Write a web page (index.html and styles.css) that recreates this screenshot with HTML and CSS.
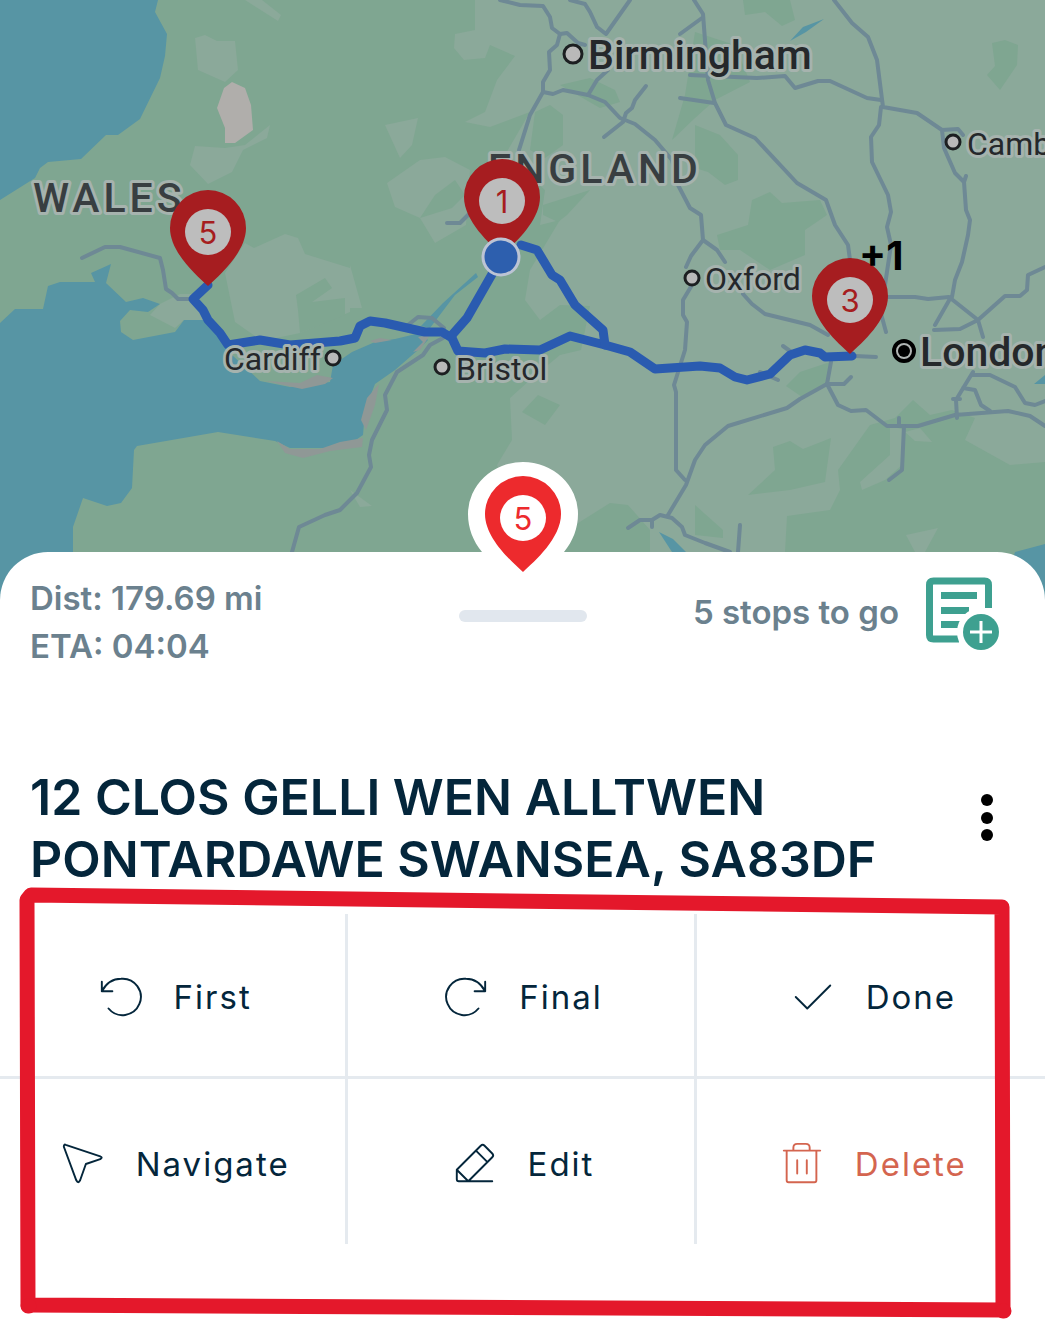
FILE: index.html
```
<!DOCTYPE html>
<html lang="en">
<head>
  <meta charset="UTF-8" />
  <meta name="viewport" content="width=device-width, initial-scale=1.0"/>
  <title>Route Planner</title>
  <link rel="stylesheet" href="styles.css">
</head>
<body>
  <div class="map">
    <svg class="map-canvas" viewBox="0 0 1045 600" preserveAspectRatio="xMidYMin slice" role="img" aria-label="Route map">
      <defs>
        <path id="pin" d="M0 0C-12 -11 -38 -34 -38 -58A38 38 0 0 1 38 -58C38 -34 12 -11 0 0Z"/>
      </defs>

      <!-- lighter ground -->
      <g class="field">
        <path d="M475 0V30L455 34L454 48L464 60L485 58L490 45L515 56L497 80L485 112L465 122L490 127L530 112L505 155L545 190L540 225L560 220L530 270L525 300L540 320L560 305L590 306L581 350L560 355L530 380L510 398L512 440L497 465L530 552H1045V0Z"/>
        <path d="M195 38L205 35L217 41L235 41L238 70L225 82L198 70Z"/>
        <path d="M195 146L225 148L245 145L270 125L267 138L243 150L232 172L208 184L190 165Z"/>
        <path d="M225 273L245 243L254 248L285 234L298 238L305 254L350 268V312L300 333L262 341L235 322Z"/>
        <path d="M385 125L418 118L412 145L400 158Z"/>
        <path d="M387 183L420 160L445 157L470 170L466 225L435 243L420 218L395 207Z"/>
        <path d="M350 265L362 308H350ZM245 0H262L281 15L278 21Z"/>
        <path d="M160 304L180 294H196L205 320H184L175 328L150 315Z"/>
        <path d="M350 490L372 506L360 507Z"/>
      </g>
      <g class="wood">
        <path d="M560 85L590 78L615 90L620 102L600 108Z"/>
        <path d="M535 112L550 105L563 115V145L545 158L530 150Z"/>
        <path d="M743 0H790L795 20L782 26L765 12L745 15Z"/>
        <path d="M695 32L735 45L750 82L715 100L695 118L672 140L685 95Z"/>
        <path d="M695 125L720 135L738 155L738 180L725 185L708 172L695 168Z"/>
        <path d="M717 235L748 225L752 200L770 192L782 203L820 200L827 215L805 230V255L770 270L740 250L720 250Z"/>
        <path d="M992 43L1005 40L1018 45L1017 65L1000 90L987 75L995 66Z"/>
        <path d="M543 205L590 190L567 215L558 222L543 215Z"/>
        <path d="M420 218L435 195L455 180L465 195L452 208Z"/>
        <path d="M786 386L800 372L830 362L828 382L802 397Z"/>
        <path d="M522 412L538 395L560 405L545 425Z"/>
        <path d="M773 447L790 441L803 449L831 438L825 482L790 490L748 495L775 470Z"/>
        <path d="M838 470L870 425L895 418L913 400L930 415L952 410L975 418L965 440L1010 465L1045 462V552H785L787 516L830 510L840 490Z"/>
        <path d="M575 525L610 503L628 505L650 530V552H560Z"/>
        <path d="M695 505L723 530V538L695 535Z"/>
        <path d="M298 310L296 295L325 278L332 288L312 302L345 298V315L300 333Z"/>
      </g>
      <g class="field">
        <path d="M860 482L890 455V426L905 430L902 465L885 480L862 490Z"/>
        <path d="M906 535L938 528L925 552H915Z"/>
        <path d="M905 432L920 428L932 442L915 441Z"/>
      </g>
      <path class="town" d="M224 88L232 82L245 88L251 105L253 130L235 143H225V128L217 108Z"/>

      <!-- sea and rivers -->
      <g class="water">
        <path d="M0 0H158L155 12L167 34L165 56L160 78L140 119L118 135H106L81 159L48 162L40 168L35 178L0 200Z"/>
        <path d="M0 323L15 309H43L48 286L60 282H95L91 273L111 264L106 283L126 302L143 298L160 304L148 312L130 310L120 321L121 332L133 340L175 332L184 320H205L232 355L260 381L290 387L330 382L333 365L352 352L375 342L395 339L420 333L428 340L418 350L395 370L375 384L365 410L363 435L350 444L335 448H290L275 441L218 432L137 446L134 450L132 488L121 503L107 506L83 498L73 527V600H0Z"/>
        <path d="M421 326L443 303L476 273L478 277L455 295L430 328Z"/>
        <path d="M790 41L803 27L824 19L806 32Z"/>
        <path d="M659 532L673 539L686 552H672Z"/>
        <path d="M1015 552L1045 544V600H1000ZM1034 384L1045 375V384Z"/>
      </g>
      <g class="shore">
        <path d="M265 381L300 383L317 375L333 378L325 384L302 389Z"/>
        <path d="M277 441L290 449H320L340 442L363 438L362 447L330 451L303 458L285 453Z"/>
        <path d="M379 384L375 405L366 430L361 420L367 398Z"/>
        <path d="M370 341L380 338L392 340L375 343ZM418 337L430 335L420 350L413 352L423 342Z"/>
      </g>

      <g class="road">
        <path d="M500 0L520 5L543 6L550 17L552 28L560 34L567 33L578 43L585 45"/>
        <path d="M560 34L557 45L549 52L550 70L543 82L543 92L530 115L519 150"/>
        <path d="M570 0L585 4L590 12L597 27L606 34L630 0"/>
        <path d="M543 92L553 94L563 90L588 95L605 102L620 118L635 124L655 140L672 160L678 185L690 208L701 215L703 240L691 256L686 267"/>
        <path d="M588 95L597 80L608 70M646 86L635 100L632 108L626 113L623 122L604 137"/>
        <path d="M680 98L714 103M680 34L702 18"/>
        <path d="M694 0L703 14L708 80L715 103L726 125L755 138L797 183L826 200L835 225L848 245L850 260"/>
        <path d="M690 75L757 78L785 76L795 88L818 81H830L867 98L881 100"/>
        <path d="M834 0L852 23L868 37L877 60L883 107L917 113L942 130L944 148L955 173L964 182L966 210L970 220L968 235L962 262L955 280L952 297M964 182L966 176M942 130L958 129L963 135"/>
        <path d="M881 107L879 125L871 137L872 162L888 195L891 212L887 227L891 245L885 285L880 310L886 332"/>
        <path d="M885 297H915L928 299L949 297L978 320L983 337M951 297L935 325M934 330L960 329L978 320L1005 296H1020L1027 290L1028 275L1045 267"/>
        <path d="M703 240L717 250L725 262M743 294L752 304L765 314L810 325L828 335"/>
        <path d="M855 356L876 357M783 346L790 351M760 372L778 380"/>
        <path d="M831 362L827 384L838 405L851 411L866 410L887 426H918L955 415L1008 411L1030 416L1045 426"/>
        <path d="M827 384L800 399L787 408L728 426L705 445L695 460L686 485L668 515"/>
        <path d="M827 384H844L851 377M904 426L902 470L889 480M899 418V426"/>
        <path d="M692 285L683 300V315L687 322L685 350L674 385L676 392V470L685 480"/>
        <path d="M628 528L640 520H652L660 515L672 518L682 527L685 535L705 543L730 552M652 520V527"/>
        <path d="M740 525L738 552"/>
        <path d="M443 338L430 345L423 355L397 372L385 395L387 410L372 440L369 455L371 467L357 493L340 510L325 515L299 527L292 552"/>
        <path d="M82 258L105 247H120L160 258L163 270L166 289L172 293L178 299H195"/>
        <path d="M447 223H460L468 215M408 325L418 317L432 318L444 328"/>
        <path d="M973 372L962 390L956 400L957 418M973 375H990L1015 387L1025 403L1035 405L1045 401M963 388L975 390L981 405L990 411M953 399H960"/>
      </g>

      <g class="route">
        <path d="M208 285L193 299L203 310L208 320L220 333L228 345L260 340L290 345L340 341L355 338L360 326L370 321L385 323L425 332H442L452 338L458 351L485 353L505 349L540 350L570 336L605 345L630 352L655 369L700 366L720 368L735 377L747 380L770 374L790 355L805 350L820 353L825 357L852 356"/>
        <path d="M452 335L467 318L499 262"/>
        <path d="M521 245L537 250L552 275L560 280L575 305L603 330L605 345"/>
      </g>

      <g class="city-dot">
        <circle cx="573" cy="54" r="9"/>
        <circle cx="953" cy="142" r="7"/>
        <circle cx="692" cy="278" r="7"/>
        <circle cx="442" cy="367" r="7"/>
        <circle cx="333" cy="358" r="7"/>
      </g>
      <circle class="capital-ring" cx="904" cy="351" r="10"/>
      <circle cx="904" cy="351" r="6"/>

      <g class="label">
        <text class="city-large" x="588" y="69">Birmingham</text>
        <text class="city-large" x="920" y="366">London</text>
        <text x="967" y="155">Cambridge</text>
        <text x="705" y="290">Oxford</text>
        <text x="456" y="380">Bristol</text>
        <text x="224" y="370">Cardiff</text>
        <text class="country" x="33" y="212">WALES</text>
        <text class="country" x="488" y="183">ENGLAND</text>
      </g>

      <g class="stop" transform="translate(208 286)">
        <use href="#pin"/>
        <circle cy="-54" r="23"/>
        <text y="-42">5</text>
      </g>
      <g class="stop" transform="translate(502 255)">
        <use href="#pin"/>
        <circle cy="-54" r="23"/>
        <text y="-42">1</text>
      </g>
      <g class="stop" transform="translate(850 354)">
        <use href="#pin"/>
        <circle cy="-54" r="23"/>
        <text y="-42">3</text>
      </g>
      <circle class="me" cx="501" cy="257" r="18"/>
      <text class="more-stops" x="859" y="270">+1</text>
    </svg>
  </div>

  <main class="sheet">
    <svg class="active-pin" viewBox="-56 -112 112 112" aria-label="Stop 5">
      <path class="halo" d="M-41 -20C-50 -31 -55 -44 -55 -58A55 52 0 0 1 55 -58C55 -44 50 -31 41 -20Z"/>
      <use href="#pin"/>
      <circle cy="-54" r="23"/>
      <text y="-42">5</text>
    </svg>

    <header class="summary">
      <div class="trip">
        <div>Dist: 179.69 mi</div>
        <div>ETA: 04:04</div>
      </div>
      <div class="handle"></div>
      <div class="remaining">
        <span>5 stops to go</span>
        <button class="icon-btn" aria-label="Add stop">
          <svg width="76" height="76" viewBox="0 0 76 76">
            <path d="M65.500 34V11Q65.500 7 61.500 7H10.500Q6.500 7 6.500 11V61Q6.500 65 10.500 65H36M18 21.500H54M18 36.500H46M18 50.500H38" fill="none" stroke="#3ea090" stroke-width="7"/>
            <circle cx="58" cy="58" r="24" fill="#fff"/>
            <circle cx="58" cy="58" r="18" fill="#3ea090"/>
            <path d="M47 58H69M58 47V69" stroke="#fff" stroke-width="3"/>
          </svg>
        </button>
      </div>
    </header>

    <div class="address">
      <h1>12 CLOS GELLI WEN ALLTWEN PONTARDAWE SWANSEA, SA83DF</h1>
      <button class="icon-btn" aria-label="More options">
        <svg width="24" height="48" viewBox="0 0 24 48">
          <circle cx="12" cy="6" r="6"/>
          <circle cx="12" cy="24" r="6"/>
          <circle cx="12" cy="41" r="6"/>
        </svg>
      </button>
    </div>

    <div class="actions">
      <button class="action">
        <svg viewBox="0 0 48 48"><path d="M4 8V18H15M4 18C9 9 16 5 24 5A19 19 0 1 1 11 36"/></svg>
        First
      </button>
      <button class="action">
        <svg viewBox="0 0 48 48"><path d="M44 8V18H33M44 18C39 9 32 5 24 5A19 19 0 1 0 37 36"/></svg>
        Final
      </button>
      <button class="action">
        <svg viewBox="0 0 48 48"><path d="M6 24L18 36L42 12"/></svg>
        Done
      </button>
      <button class="action">
        <svg viewBox="0 0 48 48"><path d="M6 4L42 16Q45 17 42 19L27 24L21 41Q19 45 17 41L4 6Q4 3 6 4Z"/></svg>
        Navigate
      </button>
      <button class="action">
        <svg viewBox="0 0 48 48"><path d="M5 30L30 5Q32 3 34 5L42 13Q44 15 42 17L17 42M5 30V40Q5 42 7 42H42M5 30L17 42M25 10L37 22"/></svg>
        Edit
      </button>
      <button class="action delete">
        <svg viewBox="0 0 48 48"><path d="M5 10H43M15 10V7Q15 3 19 3H28Q32 3 32 7V10M8 10V41Q8 43 10 43H37Q39 43 39 41V10M19 20V34M29 20V34"/></svg>
        Delete
      </button>

      <!-- hand drawn frame around the actions -->
      <svg class="frame" viewBox="0 0 1045 440" preserveAspectRatio="none">
        <path d="M31 15L1002 27L1003 430L28 425L27 20Z"/>
        <path d="M28 426H29M1003 431H1004"/>
      </svg>
    </div>
  </main>
</body>
</html>
```
FILE: styles.css
```
* {
  box-sizing: border-box;
}

body {
  margin: 0;
  min-height: 100vh;
  display: flex;
  flex-direction: column;
  background: #fff;
  color: #04263b;
  font-family: Inter, "Liberation Sans", sans-serif;
  overflow-x: hidden;
}

button {
  font: inherit;
  color: inherit;
  background: none;
  border: none;
  padding: 0;
  cursor: pointer;
}

.map {
  height: 600px;
  background: #7fa691;
}

.map-canvas {
  display: block;
  width: 100%;
  height: 100%;
}

.field {
  fill: #8ba99a;
}

.wood {
  fill: #7fa691;
}

.town {
  fill: #b0aeab;
}

.water {
  fill: #5795a4;
}

.shore {
  fill: #8f9896;
}

.road {
  fill: none;
  stroke: #6e8995;
  stroke-width: 4;
  stroke-linecap: round;
  stroke-linejoin: round;
}

.route {
  fill: none;
  stroke: #2a5bb0;
  stroke-width: 9;
  stroke-linecap: round;
  stroke-linejoin: round;
}

.city-dot {
  fill: #b9b9b9;
  stroke: #1c1f21;
  stroke-width: 3;
}

.capital-ring {
  fill: #b0b5b3;
  stroke: #000;
  stroke-width: 4;
}

.label {
  font-family: Roboto, sans-serif;
  font-size: 32px;
  fill: #25282b;
  stroke: #a6b3ae;
  stroke-width: 6;
  stroke-linejoin: round;
  paint-order: stroke;
}

.label .city-large {
  font-size: 41px;
  font-weight: 500;
}

.label .country {
  font-size: 41px;
  font-weight: 500;
  letter-spacing: 4px;
  fill: #383e41;
}

.stop {
  fill: #a61d20;
}

.stop circle {
  fill: #bdbdbd;
}

.stop text,
.active-pin text {
  font-size: 31px;
  text-anchor: middle;
}

.me {
  fill: #2d5fae;
  stroke: #bcc4d4;
  stroke-width: 3;
}

.more-stops {
  font-size: 40px;
  font-weight: 700;
}

.sheet {
  position: relative;
  flex: 1;
  margin-top: -48px;
  padding-bottom: 90px;
  background: #fff;
  border-radius: 48px 48px 0 0;
}

.active-pin {
  position: absolute;
  top: -92px;
  left: 50%;
  width: 112px;
  height: 112px;
  margin-left: -56px;
  fill: #ed2a2d;
}

.active-pin .halo,
.active-pin circle {
  fill: #fff;
}

.summary {
  display: grid;
  grid-template-columns: 1fr 128px 1fr;
  align-items: start;
  padding: 22px 30px 0;
  color: #6b818e;
  font-size: 33px;
  font-weight: 600;
  line-height: 48px;
}

.handle {
  height: 12px;
  margin-top: 36px;
  border-radius: 6px;
  background: #e1e7ee;
}

.remaining {
  display: flex;
  justify-content: flex-end;
  align-items: center;
  gap: 24px;
  padding-right: 16px;
}

.icon-btn {
  display: flex;
}

.address {
  display: flex;
  justify-content: space-between;
  align-items: flex-start;
  padding: 96px 46px 0 30px;
}

.address .icon-btn {
  padding-top: 28px;
}

h1 {
  max-width: 880px;
  margin: 0;
  font-size: 50px;
  font-weight: 600;
  line-height: 62px;
}

.actions {
  position: relative;
  display: grid;
  grid-template-columns: repeat(3, 1fr);
  margin-top: 24px;
}

.action {
  display: flex;
  align-items: center;
  justify-content: center;
  gap: 30px;
  height: 165px;
  padding: 4px 0 0 4px;
  border-right: 3px solid #e5eaef;
  font-size: 33px;
  letter-spacing: 2px;
}

.action:nth-child(3n) {
  border-right: none;
}

.action:nth-child(-n+3) {
  border-bottom: 3px solid #e5eaef;
}

.action svg {
  width: 46px;
  height: 46px;
  fill: none;
  stroke: currentColor;
  stroke-width: 2;
  stroke-linecap: round;
  stroke-linejoin: round;
}

.delete {
  color: #d4654f;
}

.actions .frame {
  position: absolute;
  top: -34px;
  left: 0;
  width: 100%;
  height: 440px;
  fill: none;
  stroke: #e4182b;
  stroke-width: 15;
  stroke-linecap: round;
  stroke-linejoin: round;
  pointer-events: none;
}
```
